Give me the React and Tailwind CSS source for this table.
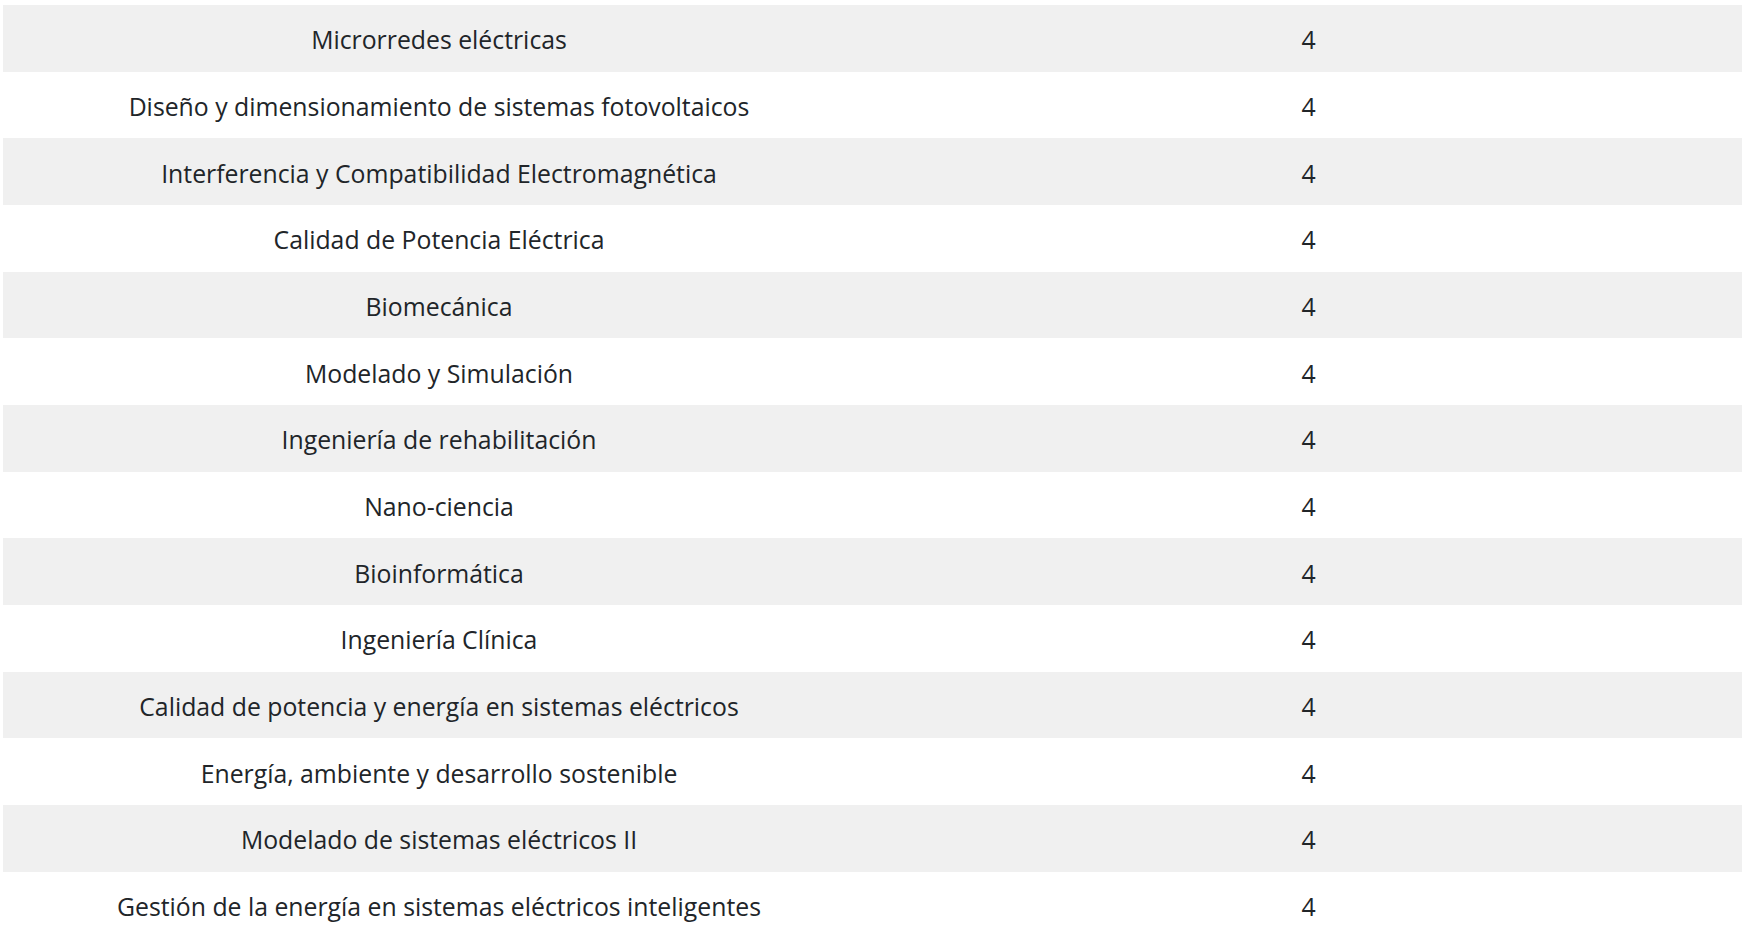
import React from "react";

const rows = [
  "Microrredes eléctricas",
  "Diseño y dimensionamiento de sistemas fotovoltaicos",
  "Interferencia y Compatibilidad Electromagnética",
  "Calidad de Potencia Eléctrica",
  "Biomecánica",
  "Modelado y Simulación",
  "Ingeniería de rehabilitación",
  "Nano-ciencia",
  "Bioinformática",
  "Ingeniería Clínica",
  "Calidad de potencia y energía en sistemas eléctricos",
  "Energía, ambiente y desarrollo sostenible",
  "Modelado de sistemas eléctricos II",
  "Gestión de la energía en sistemas eléctricos inteligentes",
];

export default function App() {
  return (
    <div
      className="w-[1742px] h-[937px] overflow-hidden bg-white pl-[3px] pt-[5px] text-[#212529]"
      style={{ fontFamily: '"Open Sans", "Noto Sans", sans-serif' }}
    >
      <div className="flex flex-col">
        {rows.map((name, i) => (
          <div
            key={i}
            className={`grid grid-cols-[872px_1fr] h-[66.67px] items-center pt-[2px] text-[24.8px] leading-[34px] ${
              i % 2 === 0 ? "bg-[#f0f0f0]" : "bg-white"
            }`}
          >
            <div className="text-center">{name}</div>
            <div className="text-center">4</div>
          </div>
        ))}
      </div>
    </div>
  );
}
